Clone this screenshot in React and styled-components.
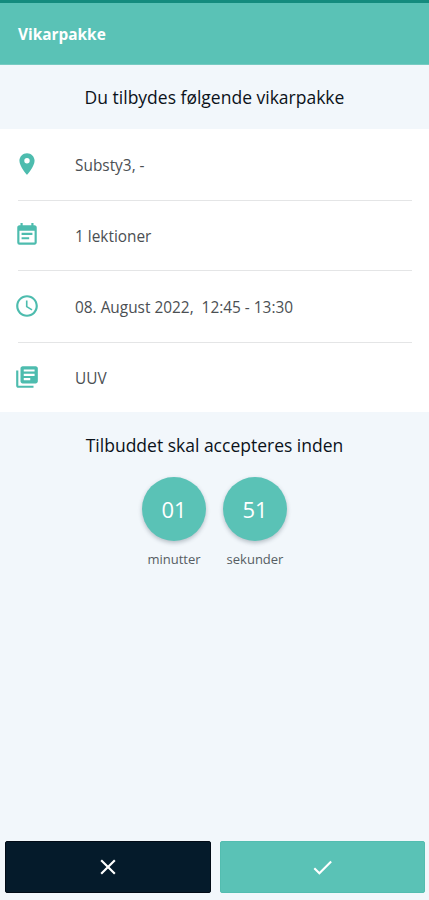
import React from 'react';
import styled, { createGlobalStyle } from 'styled-components';
import { MdPlace, MdEventNote, MdAccessTime, MdLibraryBooks, MdClose, MdCheck } from 'react-icons/md';

const GlobalStyle = createGlobalStyle`
  *, *::before, *::after { box-sizing: border-box; }
  body { margin: 0; background: #f2f7fb; font-family: 'Open Sans', 'Noto Sans', sans-serif; }
`;

const Screen = styled.main`
  display: flex;
  flex-direction: column;
  width: 100%;
  height: 900px;
  overflow: hidden;
  background: #f2f7fb;
`;

const StatusBar = styled.div`
  flex: none;
  height: 3px;
  background: #148b7e;
`;

const AppBar = styled.header`
  flex: none;
  display: flex;
  align-items: center;
  height: 62px;
  padding: 2px 18px 0;
  background: #5ac2b6;
  border-bottom: 1px solid #78cbc2;
`;

const AppTitle = styled.h1`
  margin: 0;
  color: #fff;
  font-size: 15.4px;
  font-weight: 700;
  line-height: 20px;
`;

const Heading = styled.h2`
  flex: none;
  margin: 0;
  height: ${({ $height }) => $height}px;
  line-height: ${({ $line }) => $line}px;
  text-align: center;
  white-space: nowrap;
  color: #0b121a;
  font-size: 17.5px;
  font-weight: 400;
`;

const Details = styled.ul`
  flex: none;
  list-style: none;
  margin: 0;
  padding: 0 17px 0 18px;
  height: 283px;
  background: #fff;
`;

const DetailRow = styled.li`
  display: flex;
  align-items: center;
  height: ${({ $height }) => $height}px;
  border-bottom: 1px solid #e4e5e6;

  &:last-child { border-bottom: 0; }
`;

const DetailIcon = styled.span`
  display: flex;
  width: 61px;
  margin: 0 0 1px -4px;
  color: #4dbcae;
`;

const DetailText = styled.span`
  padding-top: 1px;
  color: #4b4f53;
  font-size: 15.4px;
  line-height: 21px;
  white-space: pre;
`;

const Countdown = styled.section`
  display: flex;
  justify-content: center;
  gap: 17px;
`;

const Unit = styled.div`
  display: flex;
  flex-direction: column;
  align-items: center;
  width: 64px;
`;

const Dial = styled.div`
  display: flex;
  align-items: center;
  justify-content: center;
  width: 64px;
  height: 64px;
  border-radius: 50%;
  background: #5ac2b6;
  color: #fff;
  font-size: 22px;
  box-shadow: 0 2px 4px rgba(40, 60, 75, 0.3);
`;

const UnitLabel = styled.span`
  margin-top: 9px;
  color: #565d63;
  font-size: 13px;
  line-height: 18px;
`;

const Actions = styled.footer`
  display: flex;
  gap: 9px;
  margin-top: auto;
  padding: 0 4px 7px 5px;
`;

const ActionButton = styled.button`
  flex: 1;
  display: flex;
  align-items: center;
  justify-content: center;
  height: 52px;
  padding: 0;
  border: 1px solid ${({ $edge }) => $edge};
  border-radius: 2px;
  background: ${({ $fill }) => $fill};
  color: #fff;
`;

const details = [
  { Icon: MdPlace, text: 'Substy3, -', height: 72 },
  { Icon: MdEventNote, text: '1 lektioner', height: 70 },
  { Icon: MdAccessTime, text: '08. August 2022,  12:45 - 13:30', height: 72 },
  { Icon: MdLibraryBooks, text: 'UUV', height: 69 },
];

const units = [
  { value: '01', label: 'minutter' },
  { value: '51', label: 'sekunder' },
];

export default function App() {
  return (
    <Screen>
      <GlobalStyle />
      <StatusBar />
      <AppBar>
        <AppTitle>Vikarpakke</AppTitle>
      </AppBar>
      <Heading $height={64} $line={64}>Du tilbydes følgende vikarpakke</Heading>
      <Details>
        {details.map(({ Icon, text, height }) => (
          <DetailRow key={text} $height={height}>
            <DetailIcon><Icon size={26} /></DetailIcon>
            <DetailText>{text}</DetailText>
          </DetailRow>
        ))}
      </Details>
      <Heading $height={65} $line={66}>Tilbuddet skal accepteres inden</Heading>
      <Countdown>
        {units.map(({ value, label }) => (
          <Unit key={label}>
            <Dial>{value}</Dial>
            <UnitLabel>{label}</UnitLabel>
          </Unit>
        ))}
      </Countdown>
      <Actions>
        <ActionButton $fill="#051b2b" $edge="#020c17" aria-label="Afvis"><MdClose size={26} /></ActionButton>
        <ActionButton $fill="#5ac2b6" $edge="#53bdb0" aria-label="Accepter"><MdCheck size={25} /></ActionButton>
      </Actions>
    </Screen>
  );
}
